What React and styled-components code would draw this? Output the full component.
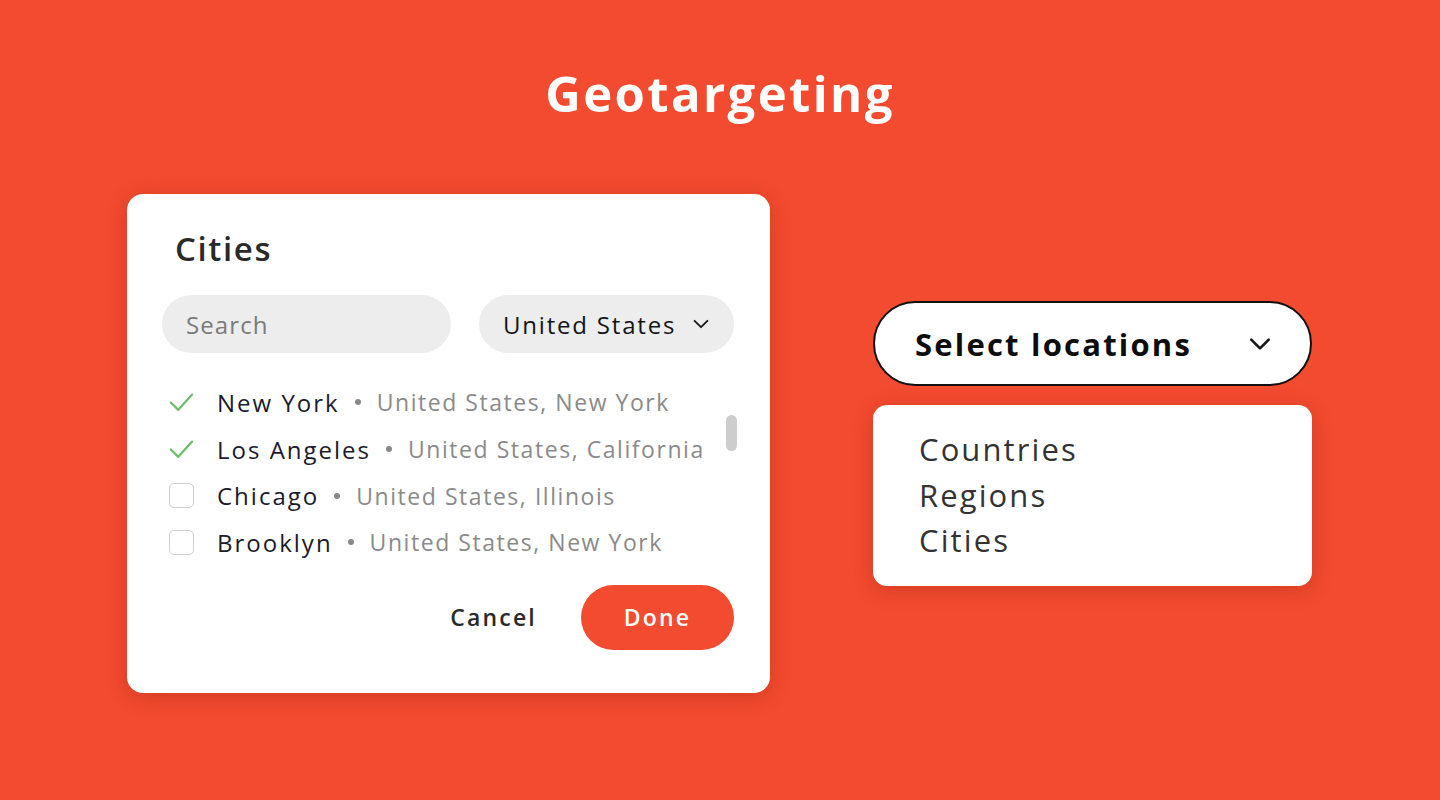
import React from "react";
import styled, { createGlobalStyle } from "styled-components";

const GlobalStyle = createGlobalStyle`
  html, body {
    margin: 0;
    padding: 0;
    background: #f24b2f;
    font-family: "Open Sans", "Liberation Sans", sans-serif;
  }
`;

const Page = styled.div`
  width: 1440px;
  height: 800px;
  background: #f24b2f;
  display: flex;
  flex-direction: column;
  align-items: center;
  box-sizing: border-box;
  padding-top: 58px;
`;

const Title = styled.h1`
  margin: 0;
  color: #fff;
  font-size: 49px;
  font-weight: 700;
  line-height: 70px;
  letter-spacing: 2.4px;
`;

const Stage = styled.div`
  width: 100%;
  display: flex;
  align-items: flex-start;
  padding-left: 127px;
  box-sizing: border-box;
  gap: 103px;
  margin-top: 66px;
`;

const Card = styled.div`
  width: 643px;
  height: 499px;
  background: #fff;
  border-radius: 16px;
  box-shadow: 0 4px 20px rgba(120, 20, 0, 0.25);
  box-sizing: border-box;
  padding: 30px 36px 0 35px;
  display: flex;
  flex-direction: column;
`;

const CardTitle = styled.h2`
  margin: 0 0 0 13px;
  font-size: 33px;
  font-weight: 600;
  color: #2a2a2a;
  line-height: 50px;
  letter-spacing: 1.6px;
`;

const Filters = styled.div`
  display: flex;
  gap: 28px;
  margin-top: 21px;
`;

const Pill = styled.div`
  height: 58px;
  width: ${(p) => p.$w}px;
  border-radius: 29px;
  background: #ededed;
  display: flex;
  align-items: center;
  justify-content: space-between;
  box-sizing: border-box;
  padding: 0 22px 0 24px;
  font-size: 24px;
  letter-spacing: ${(p) => (p.$muted ? "1.1px" : "1.8px")};
  color: ${(p) => (p.$muted ? "#7a7a7a" : "#141414")};
`;

const ListWrap = styled.div`
  position: relative;
  margin-top: 26px;
`;

const List = styled.ul`
  list-style: none;
  margin: 0;
  padding: 0;
`;

const Row = styled.li`
  display: flex;
  align-items: center;
  height: 46.7px;
  padding-left: 7px;
`;

const Mark = styled.span`
  width: 25px;
  height: 25px;
  flex: none;
  display: flex;
  align-items: center;
  justify-content: center;
  box-sizing: border-box;
  margin-right: 23px;
  border-radius: 5px;
  border: ${(p) => (p.$checked ? "none" : "1.5px solid #cfcfcf")};
`;

const City = styled.span`
  font-size: 24px;
  color: #1b1b2b;
  letter-spacing: 2px;
`;

const Dot = styled.span`
  width: 6px;
  height: 6px;
  border-radius: 50%;
  background: #888;
  margin: 0 16px 0 15px;
`;

const Detail = styled.span`
  font-size: 23px;
  color: #8a8a8a;
  letter-spacing: 1.55px;
`;

const Thumb = styled.div`
  position: absolute;
  right: -3px;
  top: 36px;
  width: 11px;
  height: 36px;
  border-radius: 6px;
  background: #cdcdcd;
`;

const Actions = styled.div`
  display: flex;
  justify-content: flex-end;
  align-items: center;
  gap: 44px;
  margin-top: 19px;
`;

const TextButton = styled.button`
  border: none;
  background: none;
  padding: 0;
  font-family: inherit;
  font-size: 23px;
  font-weight: 600;
  color: #2a2a2a;
  letter-spacing: 2.2px;
`;

const PrimaryButton = styled.button`
  border: none;
  width: 153px;
  height: 65px;
  border-radius: 33px;
  background: #f24b2f;
  color: #fff;
  font-family: inherit;
  font-size: 23px;
  font-weight: 600;
  letter-spacing: 2.2px;
`;

const Side = styled.div`
  width: 439px;
  margin-top: 107px;
  display: flex;
  flex-direction: column;
  gap: 19px;
`;

const SelectBox = styled.div`
  height: 85px;
  border: 2px solid #111;
  border-radius: 43px;
  background: #fff;
  box-sizing: border-box;
  display: flex;
  align-items: center;
  justify-content: space-between;
  padding: 0 35px 0 40px;
  font-size: 31px;
  font-weight: 700;
  color: #0d0d0d;
  letter-spacing: 2.2px;
`;

const Menu = styled.ul`
  list-style: none;
  margin: 0;
  height: 181px;
  box-sizing: border-box;
  padding: 22px 0 0 46px;
  background: #fff;
  border-radius: 14px;
  box-shadow: 0 4px 20px rgba(120, 20, 0, 0.25);
`;

const MenuItem = styled.li`
  font-size: 31px;
  color: #333;
  line-height: 45.5px;
  letter-spacing: 2.1px;
`;

const Chevron = ({ size, stroke }) => (
  <svg width={size} height={size} viewBox="0 0 24 24" fill="none">
    <path d="M5 8.5l7 7 7-7" stroke="#1a1a1a" strokeWidth={stroke} strokeLinecap="round" strokeLinejoin="round" />
  </svg>
);

const Check = () => (
  <svg width="27" height="22" viewBox="0 0 27 22" fill="none">
    <path d="M2 11.5l8 8L25 3" stroke="#6cbd6a" strokeWidth="2.4" strokeLinecap="round" strokeLinejoin="round" />
  </svg>
);

const cities = [
  { name: "New York", detail: "United States, New York", checked: true },
  { name: "Los Angeles", detail: "United States, California", checked: true },
  { name: "Chicago", detail: "United States, Illinois", checked: false },
  { name: "Brooklyn", detail: "United States, New York", checked: false },
];

export default function App() {
  return (
    <Page>
      <GlobalStyle />
      <Title>Geotargeting</Title>
      <Stage>
        <Card>
          <CardTitle>Cities</CardTitle>
          <Filters>
            <Pill $w={289} $muted>Search</Pill>
            <Pill $w={255}>
              United States
              <Chevron size={22} stroke={2} />
            </Pill>
          </Filters>
          <ListWrap>
            <List>
              {cities.map((c) => (
                <Row key={c.name}>
                  <Mark $checked={c.checked}>{c.checked && <Check />}</Mark>
                  <City>{c.name}</City>
                  <Dot />
                  <Detail>{c.detail}</Detail>
                </Row>
              ))}
            </List>
            <Thumb />
          </ListWrap>
          <Actions>
            <TextButton>Cancel</TextButton>
            <PrimaryButton>Done</PrimaryButton>
          </Actions>
        </Card>
        <Side>
          <SelectBox>
            Select locations
            <Chevron size={30} stroke={2.2} />
          </SelectBox>
          <Menu>
            <MenuItem>Countries</MenuItem>
            <MenuItem>Regions</MenuItem>
            <MenuItem>Cities</MenuItem>
          </Menu>
        </Side>
      </Stage>
    </Page>
  );
}
